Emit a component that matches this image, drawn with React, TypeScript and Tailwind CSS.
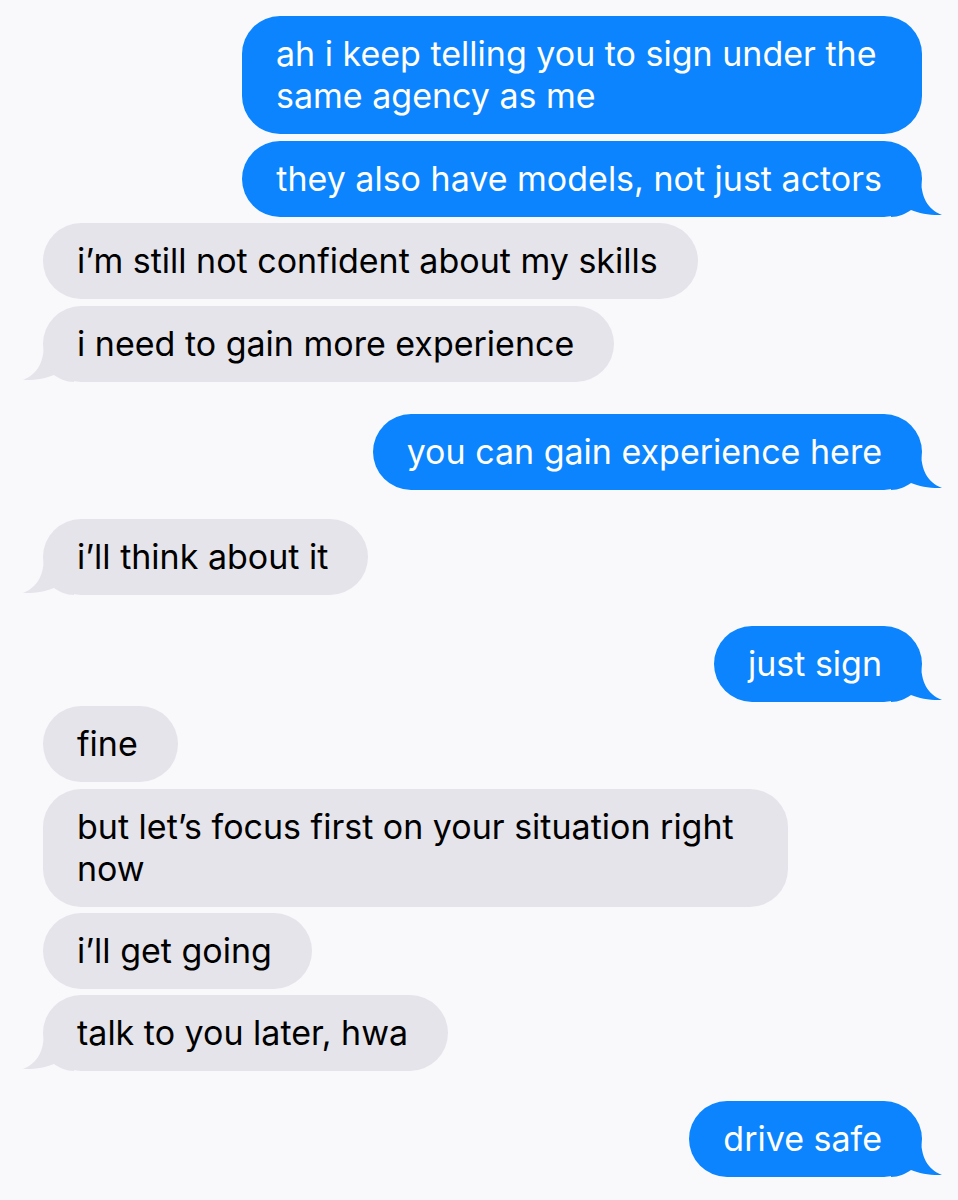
type Msg = { text: string; me: boolean; tail?: boolean; mt: string; maxW?: string };

const messages: Msg[] = [
  {
    text: 'ah i keep telling you to sign under the same agency as me',
    me: true,
    mt: 'mt-0',
    maxW: 'max-w-[680px]',
  },
  { text: 'they also have models, not just actors', me: true, tail: true, mt: 'mt-[7px]' },
  { text: 'i\u2019m still not confident about my skills', me: false, mt: 'mt-[6px]' },
  { text: 'i need to gain more experience', me: false, tail: true, mt: 'mt-[7px]' },
  { text: 'you can gain experience here', me: true, tail: true, mt: 'mt-[32px]' },
  { text: 'i\u2019ll think about it', me: false, tail: true, mt: 'mt-[29px]' },
  { text: 'just sign', me: true, tail: true, mt: 'mt-[31px]' },
  { text: 'fine', me: false, mt: 'mt-[4px]' },
  { text: 'but let\u2019s focus first on your situation right now', me: false, mt: 'mt-[7px]' },
  { text: 'i\u2019ll get going', me: false, mt: 'mt-[6px]' },
  { text: 'talk to you later, hwa', me: false, tail: true, mt: 'mt-[6px]' },
  { text: 'drive safe', me: true, tail: true, mt: 'mt-[30px]' },
];

function Tail({ me }: { me: boolean }) {
  if (me) {
    return (
      <svg
        className="absolute bottom-0 right-[-21px] pointer-events-none"
        width="52"
        height="40"
        viewBox="0 0 52 40"
      >
        <path d="M0 0H30C30 20 36 32 51 38C40 38.5 28 36.5 20 33C14 37 8 40 0 40Z" fill="#0b84fe" />
      </svg>
    );
  }
  return (
    <svg
      className="absolute bottom-0 left-[-21px] pointer-events-none"
      width="52"
      height="40"
      viewBox="0 0 52 40"
    >
      <path d="M52 0H22C22 20 16 32 1 38C12 38.5 24 36.5 32 33C38 37 44 40 52 40Z" fill="#e5e4ea" />
    </svg>
  );
}

function Bubble({ msg }: { msg: Msg }) {
  return (
    <div className={`flex ${msg.me ? 'justify-end' : 'justify-start'} ${msg.mt}`}>
      <div
        className={`relative ${msg.maxW ?? 'max-w-[745px]'} rounded-[38px] pl-[34px] pr-[40px] py-[17px] text-[34px] leading-[42px] ${
          msg.me ? 'bg-[#0b84fe] text-white' : 'bg-[#e5e4ea] text-black'
        }`}
      >
        {msg.tail && <Tail me={msg.me} />}
        <span className="relative">{msg.text}</span>
      </div>
    </div>
  );
}

export default function App() {
  return (
    <div
      className="w-[958px] h-[1200px] overflow-hidden bg-[#f9f9fb] pt-[16px] pl-[43px] pr-[36px]"
      style={{ fontFamily: 'Inter, "Noto Sans", sans-serif' }}
    >
      <div className="flex flex-col">
        {messages.map((m, i) => (
          <Bubble key={i} msg={m} />
        ))}
      </div>
    </div>
  );
}
